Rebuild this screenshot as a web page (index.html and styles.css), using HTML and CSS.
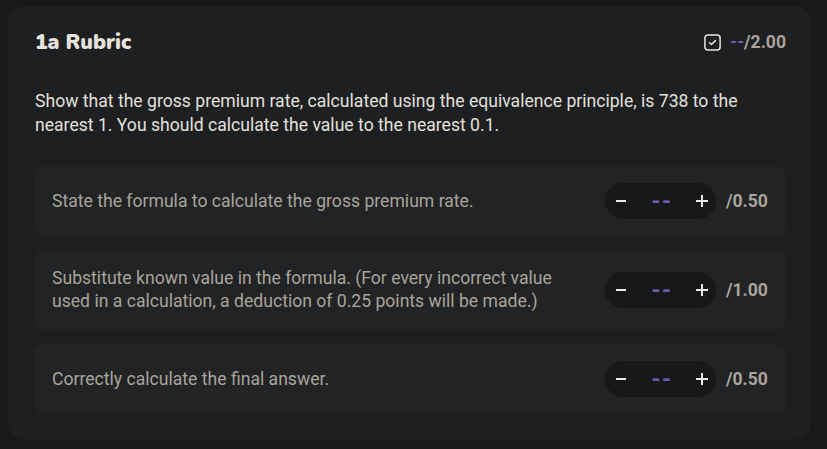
FILE: index.html
```html
<!DOCTYPE html>
<html lang="en">
<head>
<meta charset="utf-8">
<title>1a Rubric</title>
<link rel="stylesheet" href="styles.css">
</head>
<body>
<section class="card">
  <header class="card-head">
    <h1 class="title">1a Rubric</h1>
    <div class="total">
      <svg class="check" width="17" height="17" viewBox="0 0 17 17" aria-hidden="true">
        <rect x="0.9" y="0.9" width="15.2" height="15.2" rx="3" fill="none" stroke="#e6e4e0" stroke-width="1.5"/>
        <path d="M5.6 8.7 L7.5 10.5 L11.4 6.6" fill="none" stroke="#e6e4e0" stroke-width="1.5" stroke-linecap="round" stroke-linejoin="round"/>
      </svg>
      <span class="total-score"><span class="dash">--</span>/2.00</span>
    </div>
  </header>
  <p class="question">Show that the gross premium rate, calculated using the equivalence principle, is 738 to the nearest 1. You should calculate the value to the nearest 0.1.</p>
  <div class="rows">
    <div class="row">
      <p class="criterion">State the formula to calculate the gross premium rate.</p>
      <div class="controls">
        <div class="stepper">
          <svg class="btn" width="12" height="12" viewBox="0 0 12 12" aria-hidden="true"><path d="M1 6H11" stroke="#eeece8" stroke-width="2"/></svg>
          <span class="val">--</span>
          <svg class="btn" width="12" height="12" viewBox="0 0 12 12" aria-hidden="true"><path d="M0 6H12M6 0V12" stroke="#eeece8" stroke-width="2"/></svg>
        </div>
        <span class="max">/0.50</span>
      </div>
    </div>
    <div class="row">
      <p class="criterion">Substitute known value in the formula. (For every incorrect value used in a calculation, a deduction of 0.25 points will be made.)</p>
      <div class="controls">
        <div class="stepper">
          <svg class="btn" width="12" height="12" viewBox="0 0 12 12" aria-hidden="true"><path d="M1 6H11" stroke="#eeece8" stroke-width="2"/></svg>
          <span class="val">--</span>
          <svg class="btn" width="12" height="12" viewBox="0 0 12 12" aria-hidden="true"><path d="M0 6H12M6 0V12" stroke="#eeece8" stroke-width="2"/></svg>
        </div>
        <span class="max">/1.00</span>
      </div>
    </div>
    <div class="row">
      <p class="criterion">Correctly calculate the final answer.</p>
      <div class="controls">
        <div class="stepper">
          <svg class="btn" width="12" height="12" viewBox="0 0 12 12" aria-hidden="true"><path d="M1 6H11" stroke="#eeece8" stroke-width="2"/></svg>
          <span class="val">--</span>
          <svg class="btn" width="12" height="12" viewBox="0 0 12 12" aria-hidden="true"><path d="M0 6H12M6 0V12" stroke="#eeece8" stroke-width="2"/></svg>
        </div>
        <span class="max">/0.50</span>
      </div>
    </div>
  </div>
</section>
</body>
</html>
```

FILE: styles.css
```css
* { box-sizing: border-box; }
html, body { height: 100%; }
body {
  margin: 0;
  padding: 6px 16px 10px 8px;
  background: #191a1b;
  font-family: Roboto, "Noto Sans", Arial, sans-serif;
  color: #e4e2de;
}
.card {
  background: #1e1f21;
  border-radius: 16px;
  padding: 18px 25px 26px 26px;
  height: 433px;
}
.card-head {
  display: flex;
  justify-content: space-between;
  align-items: center;
  height: 36px;
}
.title {
  margin: 0;
  font-family: "Nunito", Lato, sans-serif;
  font-weight: 900;
  font-size: 21px;
  color: #e6e3de;
  padding-left: 1px;
}
.total {
  display: flex;
  align-items: center;
  gap: 9px;
}
.check { display: block; }
.total-score {
  font-size: 17.6px;
  font-weight: 700;
  color: #a9a49c;
}
.dash { color: #6b5bb3; }
.question {
  margin: 29px 0 29px 1px;
  font-size: 17.6px;
  line-height: 24px;
  color: #e2e0dc;
}
.rows {
  display: flex;
  flex-direction: column;
  gap: 14px;
}
.row {
  display: flex;
  align-items: center;
  justify-content: space-between;
  gap: 40px;
  background: #222325;
  border-radius: 10px;
  padding: 17px 18px;
  min-height: 70px;
}
.criterion {
  margin: 0;
  font-size: 17.6px;
  line-height: 23px;
  color: #a8a39b;
  max-width: 525px;
}
.controls {
  display: flex;
  align-items: center;
  gap: 10px;
  flex-shrink: 0;
}
.stepper {
  display: flex;
  align-items: center;
  justify-content: space-between;
  width: 111px;
  height: 36px;
  border-radius: 18px;
  background: #171819;
  padding: 0 8px 0 10px;
}
.btn { display: block; }
.val {
  color: #6b5bb3;
  font-size: 20px;
  font-weight: 900;
  letter-spacing: 0.5px;
  line-height: 1;
  transform: scaleX(1.1);
}
.max {
  font-size: 17.6px;
  font-weight: 700;
  color: #a9a49c;
  width: 42px;
}
```
